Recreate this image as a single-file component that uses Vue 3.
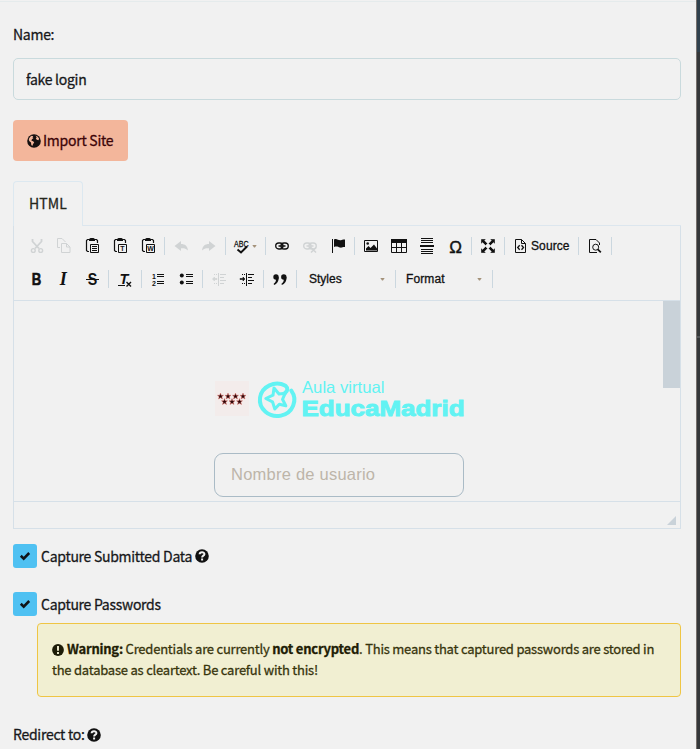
<script setup>
import { ref } from 'vue'

const name = ref('fake login')
const stars = [[5, 14.5], [12.5, 14.5], [20, 14.5], [27.5, 14.5], [9, 20], [16.5, 20], [24, 20]]

const rows = [
  [
    ['cut', 'copy', 'paste', 'pasteText', 'pasteWord'],
    ['undo', 'redo'],
    ['spell'],
    ['link', 'unlink', 'flag'],
    ['image', 'table', 'rule', 'omega'],
    ['maximize'],
    ['source'],
    ['preview'],
  ],
  [
    ['bold', 'italic', 'strike'],
    ['clear'],
    ['ol', 'ul'],
    ['outdent', 'indent'],
    ['quote'],
    ['Styles'],
    ['Format'],
  ],
]
const disabled = ['cut', 'copy', 'undo', 'redo', 'unlink', 'outdent']
const combos = ['Styles', 'Format']
</script>

<template>
  <div class="page">
    <main class="panel">
      <label class="label name-label">Name:</label>
      <input v-model="name" class="name-input" />
      <button class="import">
        <svg class="globe" viewBox="0 0 14 14">
          <circle cx="7" cy="7" r="6.8" fill="#151010" />
          <path d="M4.500 1.800 6.300 2.200 5.500 3.500 6.500 4 5 5.200 4.300 6.500 6 7.200 7.200 8.300 6 10.200 5.300 12 4.300 11 4 8.500 2.200 7 1.800 5 3 3zM8.500 1.600l2.300 1.200 1.400 2-.8 1.400-1.600-.4-1-1.300.9-1z" fill="#f3b69b" />
        </svg>
        <span class="lift">Import Site</span>
      </button>

      <div class="tabs"><div class="tab">HTML</div><div class="tab-rest"></div></div>

      <section class="editor">
        <div class="toolbar">
          <div v-for="(row, r) in rows" :key="r" class="row">
            <template v-for="group in row" :key="group[0]">
              <div v-for="i in group" :key="i" :class="['btn', 'btn-' + i, { off: disabled.includes(i), combo: combos.includes(i) }]">
                <template v-if="combos.includes(i)">
                  <span>{{ i }}</span><i class="caret"></i>
                </template>
                <svg v-else class="ico" viewBox="0 0 16 16" fill="none" stroke="currentColor">
                  <g v-if="i === 'cut'" stroke-width="1.4">
                    <path d="M4.500 1v2.500l6.500 7M13.500 1v2.500l-6.500 7" stroke-width="1.800" />
                    <circle cx="5.300" cy="12.500" r="1.900" /><circle cx="12.700" cy="12.500" r="1.900" />
                  </g>
                  <g v-else-if="i === 'copy'">
                    <path d="M4 9.500H1.500v-9H6L9.500 4M5.500 5.500h5l3.500 3.500v5.500H5.500zM10.500 5.500V9H14" />
                  </g>
                  <g v-else-if="['paste', 'pasteText', 'pasteWord'].includes(i)">
                    <path d="M5 1.500H3.500l-1 1v10l1 1H5M11 1.500h1.500l1 1V5" stroke-width="1.200" />
                    <path d="M5 3V1L6.500 0h3L11 1v2z" fill="currentColor" stroke="none" />
                    <path d="M6.500 6.500h8v8h-8z" />
                    <path v-if="i === 'paste'" d="M8 8.500h5M8 10.500h5M8 12.500h5" />
                    <text v-else x="10.500" y="13.200" class="tiny">{{ i === 'pasteText' ? 'T' : 'W' }}</text>
                  </g>
                  <path v-else-if="i === 'undo'" d="M1.500 8 8 3v3c4 0 6.500 2 7 6.500C13 10.500 11 10 8 10.200V13z" fill="currentColor" stroke="none" />
                  <path v-else-if="i === 'redo'" d="M14.500 8 8 3v3c-4 0-6.500 2-7 6.500C3 10.500 5 10 8 10.200V13z" fill="currentColor" stroke="none" />
                  <g v-else-if="i === 'spell'">
                    <text x="0" y="8.600" class="abc" textLength="14.500" lengthAdjust="spacingAndGlyphs">ABC</text>
                    <path d="m3.500 11.500 3.500 3 6-6" stroke-width="2" />
                  </g>
                  <g v-else-if="i === 'link' || i === 'unlink'">
                    <rect x="1.700" y="5" width="7.300" height="6" rx="3" stroke-width="1.300" />
                    <rect x="7" y="5" width="7.300" height="6" rx="3" stroke-width="1.300" />
                    <path d="M4.500 8h7" stroke-width="1.500" />
                    <path v-if="i === 'unlink'" d="m9 9.500 5 5M14 9.500l-5 5" stroke-width="1.500" />
                  </g>
                  <g v-else-if="i === 'flag'">
                    <path d="M2.500 1v14" />
                    <path d="M4 1.500c3-1.500 4.500 1.500 7 .700 1-.300 2-.900 4-.700v7.500c-2-.300-3 1-5 .600-2-.500-3-1.600-6-.600z" fill="currentColor" stroke="none" />
                  </g>
                  <g v-else-if="i === 'image'">
                    <path d="M1.500 2.500h13v11h-13z" />
                    <path d="M3 12.500v-2L5.500 8l2 2L11 6.500l3 4v2z" fill="currentColor" stroke="none" />
                    <circle cx="4.700" cy="5.500" r="1.300" fill="currentColor" stroke="none" />
                  </g>
                  <g v-else-if="i === 'table'">
                    <path d="M0 1h16v4H0z" fill="currentColor" stroke="none" />
                    <path d="M.5 1.500h15v13H.5zM0 9.500h16M5.500 5v9M10.500 5v9" />
                  </g>
                  <g v-else-if="i === 'rule'">
                    <path d="M2 .5h12M2 2.500h12M2 4.500h12M2 11.500h12M2 13.500h12M2 15.500h12" />
                    <path d="M1 8h14" stroke-width="2" />
                  </g>
                  <text v-else-if="i === 'omega'" x="8.500" y="14.500" class="omega">Ω</text>
                  <g v-else-if="i === 'maximize'">
                    <path d="M1 1h5L4.600 2.600 7.500 5.500l-2 2-2.900-2.900L1 6zM15 1v5l-1.600-1.400-2.900 2.900-2-2 2.900-2.900L10 1zM1 15v-5l1.600 1.400 2.900-2.900 2 2-2.900 2.900L6 15zM15 15h-5l1.400-1.600-2.900-2.900 2-2 2.900 2.900L15 10z" fill="currentColor" stroke="#f1f1f1" stroke-width=".4" />
                  </g>
                  <g v-else-if="i === 'source'">
                    <path d="M2.500 1.500h6l4 4v9h-10zM8.500 1.500v4h4" />
                    <path d="M6.700 7.300 4.700 9.500l2 2.200M8.500 7.300l2 2.200-2 2.200" stroke-width="1.300" />
                  </g>
                  <g v-else-if="i === 'preview'">
                    <path d="M12.500 7V5L9 1.500H2.500v13H10" />
                    <circle cx="8.700" cy="9.200" r="3" />
                    <path d="m10.800 11.300 3 3" stroke-width="1.800" />
                  </g>
                  <text v-else-if="i === 'bold'" x="8.500" y="14" class="letter heavy" textLength="9.500" lengthAdjust="spacingAndGlyphs">B</text>
                  <text v-else-if="i === 'italic'" x="7.200" y="14" class="letter serif">I</text>
                  <g v-else-if="i === 'strike'">
                    <text x="8.500" y="14" class="letter" textLength="9.500" lengthAdjust="spacingAndGlyphs">S</text>
                    <path d="M2 8.500h13" />
                  </g>
                  <g v-else-if="i === 'clear'">
                    <text x="7" y="12.500" class="letter slanted">T</text>
                    <path d="M1 14.500h7" /><path d="m9.500 11 4.500 4.500M14 11l-4.500 4.500" stroke-width="1.400" />
                  </g>
                  <g v-else-if="i === 'ol'">
                    <text x="4" y="7.800" class="num">1</text><text x="4" y="15" class="num">2</text>
                    <path d="M7 3.500h7M7 5.500h7M7 10.500h7M7 12.500h7" />
                  </g>
                  <g v-else-if="i === 'ul'">
                    <circle cx="3.800" cy="4.500" r="2" fill="currentColor" stroke="none" /><circle cx="3.800" cy="11.500" r="2" fill="currentColor" stroke="none" />
                    <path d="M8 3.500h7M8 5.500h7M8 10.500h7M8 12.500h7" />
                  </g>
                  <g v-else-if="i === 'outdent' || i === 'indent'">
                    <path d="M7.500 2v13" /><path d="M9 3.500h6M9 6.500h4M9 9.500h6M9 12.500h4" />
                    <path d="M3 3.500h1M5 3.500h1M3 12.500h1M5 12.500h1" />
                    <path v-if="i === 'indent'" d="M1 7.500h3V6L6 8l-2 2V8.500H1z" fill="currentColor" stroke-width=".6" />
                    <path v-else d="M6 7.500H3.500V6l-2 2 2 2V8.500H6z" fill="currentColor" stroke-width=".6" />
                  </g>
                  <g v-else-if="i === 'quote'" fill="currentColor" stroke="none">
                    <circle cx="4" cy="6" r="2.700" /><path d="M6.700 6c.300 4-1.700 7-4.700 8l-.3-1.200C3.500 11.500 4 10 4 8z" />
                    <circle cx="11.800" cy="6" r="2.700" /><path d="M14.500 6c.300 4-1.700 7-4.700 8l-.3-1.200c1.800-1.300 2.300-2.800 2.300-4.800z" />
                  </g>
                </svg>
                <i v-if="i === 'spell'" class="caret"></i>
                <span v-if="i === 'source'">Source</span>
              </div>
              <i class="sep"></i>
            </template>
          </div>
        </div>

        <div class="canvas">
          <div class="doc">
            <div class="brand">
              <svg class="emblem" viewBox="0 0 34 35">
                <rect width="34" height="35" fill="#f3eceb" />
                <path v-for="(s, k) in stars" :key="k" :transform="`translate(${s[0] + 0.5} ${s[1] + 0.8})`" d="M0-3.200.8-1 3-1 1.300.500 2 2.700 0 1.400-2 2.700-1.300.500-3-1-.8-1z" fill="#2a0406" stroke="#e0746c" stroke-width=".5" />
              </svg>
              <svg class="ring" viewBox="0 0 40 38" fill="none" stroke="#62f3f3" stroke-linecap="round" stroke-linejoin="round">
                <path d="M29 13.500C32 11.500 32 8.500 29.500 6.200A17.200 16.200 0 1 0 35.300 11.200" stroke-width="4" transform="translate(-1 -.5)" />
                <path d="M28.300 13.200 22 14 17 8 16 15.200 8.800 18.500 15.500 21.800 17.800 29 22.300 24.300 28.800 25.800 25.500 19.300z" stroke-width="3" />
              </svg>
              <svg class="wordmark" viewBox="0 0 166 40" fill="#62f3f3">
                <text x="0" y="13" font-size="16.500" textLength="82.500" lengthAdjust="spacingAndGlyphs">Aula virtual</text>
                <text x="-0.500" y="36" font-size="22" font-weight="700" stroke="#62f3f3" stroke-width=".9" textLength="163" lengthAdjust="spacingAndGlyphs">EducaMadrid</text>
              </svg>
            </div>
            <div class="user">Nombre de usuario</div>
          </div>
          <div class="scroll"></div>
        </div>
        <div class="footer"><svg viewBox="0 0 9 9"><path d="M9 0v9H0z" fill="#c9d2d9" /></svg></div>
      </section>

      <div class="check first">
        <span class="box"><svg viewBox="0 0 12 10"><path d="m1.800 4.800 2.900 2.800L10.200 2" fill="none" stroke="#101418" stroke-width="2.600" /></svg></span>
        <span>Capture Submitted Data</span>
        <svg class="round" viewBox="0 0 14 14"><circle cx="7" cy="7" r="6.800" fill="#111" /><path d="M4.600 5.300C4.700 2.500 9.500 2.600 9.400 5.200 9.300 6.800 7.200 6.600 7.100 8.500M7.100 9.500v2" fill="none" stroke="#f1f1f1" stroke-width="2" /></svg>
      </div>
      <div class="check">
        <span class="box"><svg viewBox="0 0 12 10"><path d="m1.800 4.800 2.900 2.800L10.200 2" fill="none" stroke="#101418" stroke-width="2.600" /></svg></span>
        <span>Capture Passwords</span>
      </div>

      <div class="warning">
        <div class="line"><svg class="bang" viewBox="0 0 12 12"><circle cx="6" cy="6" r="5.900" fill="#1d1c08" /><path d="M6 2v4.700M6 8v1.900" stroke="#f1efd2" stroke-width="1.900" /></svg><span class="lift"><b>Warning:</b> Credentials are currently <b>not encrypted</b>. This means that captured passwords are stored in</span></div>
        <div class="line"><span class="lift">the database as cleartext. Be careful with this!</span></div>
      </div>

      <div class="redirect">
        <span class="lift">Redirect to:</span>
        <svg class="round" viewBox="0 0 14 14"><circle cx="7" cy="7" r="6.800" fill="#111" /><path d="M4.600 5.300C4.700 2.500 9.500 2.600 9.400 5.200 9.300 6.800 7.200 6.600 7.100 8.500M7.100 9.500v2" fill="none" stroke="#f1f1f1" stroke-width="2" /></svg>
      </div>
    </main>
    <aside class="edge"><div class="edge-top"></div><div class="edge-mid"></div><div class="edge-line"></div></aside>
  </div>
</template>

<style>
body { overflow: hidden; background: #f1f1f1; }
</style>

<style scoped>
* { box-sizing: border-box; }
.page { display: flex; width: 700px; height: 749px; overflow: hidden; background: #f1f1f1; color: #17181a; font: 400 14px/20px "Noto Sans CJK SC", "Noto Sans", sans-serif; letter-spacing: -.28px; -webkit-text-stroke: .28px currentColor; white-space: nowrap; }
.panel { display: flex; flex-direction: column; width: 696px; height: 749px; padding: 0 15px 0 13px; background: linear-gradient(#f1f1f1 1px, #e5ebec 1px, #e5ebec 2px, #f1f1f1 2px); }
.edge { display: flex; flex-direction: column; width: 4px; border-left: 1px solid #77706c; background: #35383a; }
.edge-top { height: 52px; background: #30414d; }
.edge-mid { height: 284px; }
.edge-line { height: 2px; background: #53575a; }
.label { display: block; }
.lift { padding-bottom: 2px; }
.name-label { height: 34px; margin-top: 24px; }
.name-input { width: 668px; height: 42px; padding: 0 12px; border: 1px solid #c9dadd; border-radius: 5px; outline: 0; background: transparent; color: #17181a; font: inherit; letter-spacing: -.28px; flex: none; }
.import { display: flex; align-items: center; gap: 2px; width: 115px; height: 41px; margin-top: 20px; padding: 0 14px; border: 0; border-radius: 4px; background: #f3b69b; color: #3d0508; font: inherit; letter-spacing: -.25px; flex: none; }
.globe { width: 14px; height: 14px; flex: none; }
.tabs { display: flex; height: 45px; margin-top: 20px; flex: none; }
.tab { width: 70px; padding: 11px 0 0 15px; border: 1px solid #dce8f0; border-bottom: 0; border-radius: 4px 4px 0 0; color: #24261b; letter-spacing: .1px; }
.tab-rest { flex: 1; border-bottom: 1px solid #dce6ee; }
.editor { display: flex; flex-direction: column; height: 303px; border: 1px solid #d6e0e8; border-top: 0; flex: none; letter-spacing: 0; -webkit-text-stroke: 0; }
.toolbar { display: flex; flex-direction: column; gap: 15px; height: 75px; padding: 11px 0 0 8px; border-bottom: 1px solid #d6e0e8; font: 12px/18px "Liberation Sans", sans-serif; color: #111; }
.row { display: flex; align-items: center; height: 18px; }
.btn { display: flex; align-items: center; width: 28px; height: 18px; padding: 0 6px; -webkit-text-stroke: .3px currentColor; }
.btn-spell { width: 35px; padding-right: 0; }
.btn-source { width: 69px; gap: 2px; letter-spacing: .1px; }
.off { color: #d0d3d4; }
.combo { width: 94px; padding: 0 8px 0 10px; justify-content: space-between; }
.btn-Format { width: 92px; padding: 0 8px 0 8px; letter-spacing: .1px; }
.ico { width: 16px; height: 16px; flex: none; overflow: visible; }
.ico text { fill: currentColor; stroke: none; text-anchor: middle; letter-spacing: 0; -webkit-text-stroke: 0; font-family: "Liberation Sans", sans-serif; }
.ico .tiny { font-size: 7px; font-weight: 700; }
.ico .abc { font-size: 9.500px; text-anchor: start; stroke: currentColor; stroke-width: .3px; }
.ico .omega { font-size: 17px; stroke: currentColor; stroke-width: .4px; }
.ico .letter { font-size: 16.500px; font-weight: 700; }
.ico .heavy { stroke: currentColor; stroke-width: .6px; }
.ico .serif { font-family: "Liberation Serif", serif; font-style: italic; font-size: 18px; }
.ico .slanted { font-style: italic; font-size: 14.500px; }
.ico .num { font-size: 7px; font-weight: 700; }
.sep { width: 1px; height: 18px; margin: 0 2px; background: #cbd7df; flex: none; }
.caret { width: 5px; height: 3px; margin-left: 2px; background: #a4927a; clip-path: polygon(0 0, 100% 0, 60% 100%, 40% 100%); flex: none; }
.canvas { display: flex; height: 200px; overflow: hidden; font-family: "Liberation Sans", sans-serif; }
.doc { flex: 1; padding: 79px 0 0 200px; }
.brand { display: flex; height: 73px; }
.emblem { width: 34px; height: 35px; margin: 1px 8px 0 1px; }
.ring { width: 40px; height: 38px; overflow: visible; }
.wordmark { width: 166px; height: 40px; margin-left: 5px; font-family: "Liberation Sans", sans-serif; overflow: visible; }
.user { width: 250px; height: 44px; padding: 0 16px; border: 1px solid #aabbc6; border-radius: 9px; color: #bdb5a9; font: 16.500px/41px "Liberation Sans", sans-serif; letter-spacing: .23px; }
.scroll { width: 17px; height: 87px; background: #c9d2d9; }
.footer { display: flex; justify-content: flex-end; height: 27px; padding: 14px 4px 0 0; border-top: 1px solid #d6e0e8; }
.footer svg { width: 9px; height: 9px; }
.check { display: flex; align-items: center; height: 24px; margin-top: 24px; flex: none; }
.check.first { margin-top: 15px; }
.box { display: flex; align-items: center; justify-content: center; width: 24px; height: 24px; margin-right: 4px; border-radius: 3px; background: #4fc1f2; }
.box svg { width: 12px; height: 10px; }
.round { width: 14px; height: 14px; margin-left: 3px; flex: none; }
.redirect .round { margin-left: 2px; }
.warning { width: 644px; height: 74px; margin: 7px 0 0 24px; padding: 15px 14px; border: 1px solid #efc544; border-radius: 4px; background: #f1efd2; color: #37340c; font-size: 13px; line-height: 21px; letter-spacing: -.22px; flex: none; }
.line { display: flex; align-items: center; height: 21px; }
.bang { width: 12px; height: 12px; margin-right: 3px; flex: none; }
b { color: #1f1d05; }
.redirect { display: flex; align-items: center; height: 20px; margin-top: 28px; flex: none; }
</style>
